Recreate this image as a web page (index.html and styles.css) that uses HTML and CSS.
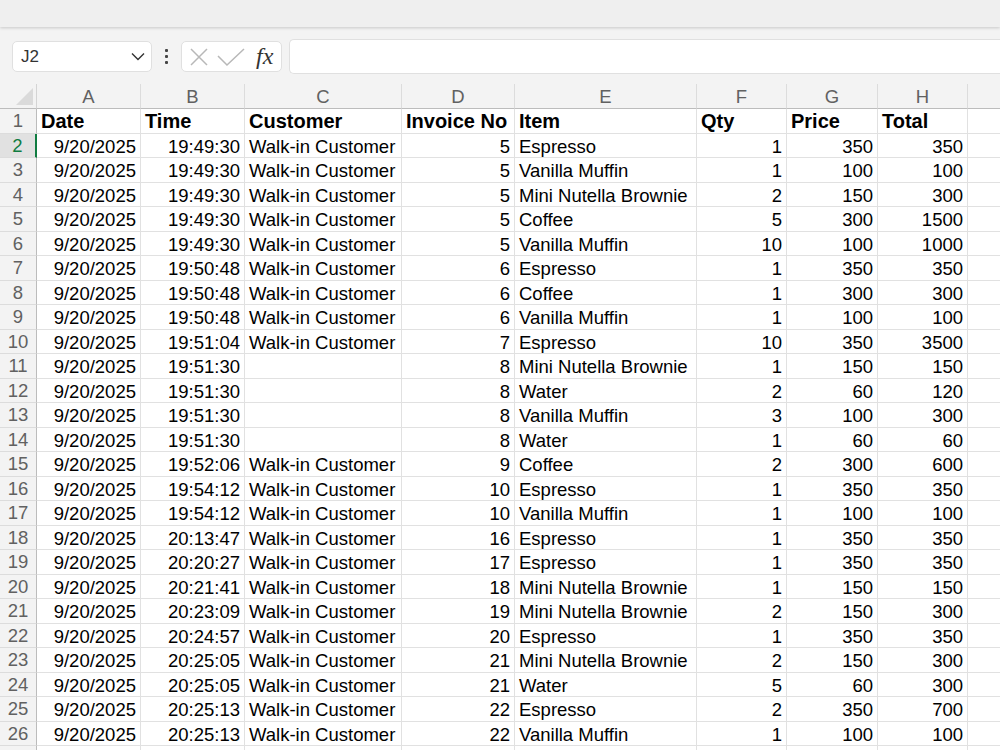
FILE: index.html
```html
<!DOCTYPE html>
<html lang="en">
<head>
    <meta charset="UTF-8">
    <title>Sales - Sheet1</title>
    <link rel="stylesheet" href="styles.css">
</head>
<body>

    <div class="top-band"></div>

    <div class="formula-bar">
        <div class="name-box">
            <span>J2</span>
            <svg width="14" height="9" viewBox="0 0 14 9"><path d="M1 1.5 L7 7.5 L13 1.5" fill="none" stroke="#333" stroke-width="1.4"/></svg>
        </div>
        <div class="more-dots">
            <i></i><i></i><i></i>
        </div>
        <div class="fx-box">
            <svg width="18" height="18" viewBox="0 0 18 18"><path d="M1 1 L17 17 M17 1 L1 17" stroke="#b8b8b8" stroke-width="1.5"/></svg>
            <svg width="28" height="20" viewBox="0 0 28 20"><path d="M1 9 L10 18 L27 2" fill="none" stroke="#b8b8b8" stroke-width="1.5"/></svg>
            <span class="fx">fx</span>
        </div>
        <div class="formula-input"></div>
    </div>

    <div class="sheet">
        <div class="corner"></div>
        <div class="col-head">A</div>
        <div class="col-head">B</div>
        <div class="col-head">C</div>
        <div class="col-head">D</div>
        <div class="col-head">E</div>
        <div class="col-head">F</div>
        <div class="col-head">G</div>
        <div class="col-head">H</div>
        <div class="col-head"></div>

        <div class="row-head">1</div>
        <div class="cell bold">Date</div>
        <div class="cell bold">Time</div>
        <div class="cell bold">Customer</div>
        <div class="cell bold">Invoice No</div>
        <div class="cell bold">Item</div>
        <div class="cell bold">Qty</div>
        <div class="cell bold">Price</div>
        <div class="cell bold">Total</div>
        <div class="cell"></div>

        <div class="row-head selected">2</div>
        <div class="cell num">9/20/2025</div><div class="cell num">19:49:30</div><div class="cell">Walk-in Customer</div>
        <div class="cell num">5</div><div class="cell">Espresso</div><div class="cell num">1</div><div class="cell num">350</div><div class="cell num">350</div><div class="cell"></div>

        <div class="row-head">3</div>
        <div class="cell num">9/20/2025</div><div class="cell num">19:49:30</div><div class="cell">Walk-in Customer</div>
        <div class="cell num">5</div><div class="cell">Vanilla Muffin</div><div class="cell num">1</div><div class="cell num">100</div><div class="cell num">100</div><div class="cell"></div>

        <div class="row-head">4</div>
        <div class="cell num">9/20/2025</div><div class="cell num">19:49:30</div><div class="cell">Walk-in Customer</div>
        <div class="cell num">5</div><div class="cell">Mini Nutella Brownie</div><div class="cell num">2</div><div class="cell num">150</div><div class="cell num">300</div><div class="cell"></div>

        <div class="row-head">5</div>
        <div class="cell num">9/20/2025</div><div class="cell num">19:49:30</div><div class="cell">Walk-in Customer</div>
        <div class="cell num">5</div><div class="cell">Coffee</div><div class="cell num">5</div><div class="cell num">300</div><div class="cell num">1500</div><div class="cell"></div>

        <div class="row-head">6</div>
        <div class="cell num">9/20/2025</div><div class="cell num">19:49:30</div><div class="cell">Walk-in Customer</div>
        <div class="cell num">5</div><div class="cell">Vanilla Muffin</div><div class="cell num">10</div><div class="cell num">100</div><div class="cell num">1000</div><div class="cell"></div>

        <div class="row-head">7</div>
        <div class="cell num">9/20/2025</div><div class="cell num">19:50:48</div><div class="cell">Walk-in Customer</div>
        <div class="cell num">6</div><div class="cell">Espresso</div><div class="cell num">1</div><div class="cell num">350</div><div class="cell num">350</div><div class="cell"></div>

        <div class="row-head">8</div>
        <div class="cell num">9/20/2025</div><div class="cell num">19:50:48</div><div class="cell">Walk-in Customer</div>
        <div class="cell num">6</div><div class="cell">Coffee</div><div class="cell num">1</div><div class="cell num">300</div><div class="cell num">300</div><div class="cell"></div>

        <div class="row-head">9</div>
        <div class="cell num">9/20/2025</div><div class="cell num">19:50:48</div><div class="cell">Walk-in Customer</div>
        <div class="cell num">6</div><div class="cell">Vanilla Muffin</div><div class="cell num">1</div><div class="cell num">100</div><div class="cell num">100</div><div class="cell"></div>

        <div class="row-head">10</div>
        <div class="cell num">9/20/2025</div><div class="cell num">19:51:04</div><div class="cell">Walk-in Customer</div>
        <div class="cell num">7</div><div class="cell">Espresso</div><div class="cell num">10</div><div class="cell num">350</div><div class="cell num">3500</div><div class="cell"></div>

        <div class="row-head">11</div>
        <div class="cell num">9/20/2025</div><div class="cell num">19:51:30</div><div class="cell"></div>
        <div class="cell num">8</div><div class="cell">Mini Nutella Brownie</div><div class="cell num">1</div><div class="cell num">150</div><div class="cell num">150</div><div class="cell"></div>

        <div class="row-head">12</div>
        <div class="cell num">9/20/2025</div><div class="cell num">19:51:30</div><div class="cell"></div>
        <div class="cell num">8</div><div class="cell">Water</div><div class="cell num">2</div><div class="cell num">60</div><div class="cell num">120</div><div class="cell"></div>

        <div class="row-head">13</div>
        <div class="cell num">9/20/2025</div><div class="cell num">19:51:30</div><div class="cell"></div>
        <div class="cell num">8</div><div class="cell">Vanilla Muffin</div><div class="cell num">3</div><div class="cell num">100</div><div class="cell num">300</div><div class="cell"></div>

        <div class="row-head">14</div>
        <div class="cell num">9/20/2025</div><div class="cell num">19:51:30</div><div class="cell"></div>
        <div class="cell num">8</div><div class="cell">Water</div><div class="cell num">1</div><div class="cell num">60</div><div class="cell num">60</div><div class="cell"></div>

        <div class="row-head">15</div>
        <div class="cell num">9/20/2025</div><div class="cell num">19:52:06</div><div class="cell">Walk-in Customer</div>
        <div class="cell num">9</div><div class="cell">Coffee</div><div class="cell num">2</div><div class="cell num">300</div><div class="cell num">600</div><div class="cell"></div>

        <div class="row-head">16</div>
        <div class="cell num">9/20/2025</div><div class="cell num">19:54:12</div><div class="cell">Walk-in Customer</div>
        <div class="cell num">10</div><div class="cell">Espresso</div><div class="cell num">1</div><div class="cell num">350</div><div class="cell num">350</div><div class="cell"></div>

        <div class="row-head">17</div>
        <div class="cell num">9/20/2025</div><div class="cell num">19:54:12</div><div class="cell">Walk-in Customer</div>
        <div class="cell num">10</div><div class="cell">Vanilla Muffin</div><div class="cell num">1</div><div class="cell num">100</div><div class="cell num">100</div><div class="cell"></div>

        <div class="row-head">18</div>
        <div class="cell num">9/20/2025</div><div class="cell num">20:13:47</div><div class="cell">Walk-in Customer</div>
        <div class="cell num">16</div><div class="cell">Espresso</div><div class="cell num">1</div><div class="cell num">350</div><div class="cell num">350</div><div class="cell"></div>

        <div class="row-head">19</div>
        <div class="cell num">9/20/2025</div><div class="cell num">20:20:27</div><div class="cell">Walk-in Customer</div>
        <div class="cell num">17</div><div class="cell">Espresso</div><div class="cell num">1</div><div class="cell num">350</div><div class="cell num">350</div><div class="cell"></div>

        <div class="row-head">20</div>
        <div class="cell num">9/20/2025</div><div class="cell num">20:21:41</div><div class="cell">Walk-in Customer</div>
        <div class="cell num">18</div><div class="cell">Mini Nutella Brownie</div><div class="cell num">1</div><div class="cell num">150</div><div class="cell num">150</div><div class="cell"></div>

        <div class="row-head">21</div>
        <div class="cell num">9/20/2025</div><div class="cell num">20:23:09</div><div class="cell">Walk-in Customer</div>
        <div class="cell num">19</div><div class="cell">Mini Nutella Brownie</div><div class="cell num">2</div><div class="cell num">150</div><div class="cell num">300</div><div class="cell"></div>

        <div class="row-head">22</div>
        <div class="cell num">9/20/2025</div><div class="cell num">20:24:57</div><div class="cell">Walk-in Customer</div>
        <div class="cell num">20</div><div class="cell">Espresso</div><div class="cell num">1</div><div class="cell num">350</div><div class="cell num">350</div><div class="cell"></div>

        <div class="row-head">23</div>
        <div class="cell num">9/20/2025</div><div class="cell num">20:25:05</div><div class="cell">Walk-in Customer</div>
        <div class="cell num">21</div><div class="cell">Mini Nutella Brownie</div><div class="cell num">2</div><div class="cell num">150</div><div class="cell num">300</div><div class="cell"></div>

        <div class="row-head">24</div>
        <div class="cell num">9/20/2025</div><div class="cell num">20:25:05</div><div class="cell">Walk-in Customer</div>
        <div class="cell num">21</div><div class="cell">Water</div><div class="cell num">5</div><div class="cell num">60</div><div class="cell num">300</div><div class="cell"></div>

        <div class="row-head">25</div>
        <div class="cell num">9/20/2025</div><div class="cell num">20:25:13</div><div class="cell">Walk-in Customer</div>
        <div class="cell num">22</div><div class="cell">Espresso</div><div class="cell num">2</div><div class="cell num">350</div><div class="cell num">700</div><div class="cell"></div>

        <div class="row-head">26</div>
        <div class="cell num">9/20/2025</div><div class="cell num">20:25:13</div><div class="cell">Walk-in Customer</div>
        <div class="cell num">22</div><div class="cell">Vanilla Muffin</div><div class="cell num">1</div><div class="cell num">100</div><div class="cell num">100</div><div class="cell"></div>

        <div class="row-head"></div>
        <div class="cell"></div><div class="cell"></div><div class="cell"></div>
        <div class="cell"></div><div class="cell"></div><div class="cell"></div><div class="cell"></div><div class="cell"></div><div class="cell"></div>
    </div>

</body>
</html>
```

FILE: styles.css
```css
html, body {
    margin: 0;
    padding: 0;
    height: 750px;
    overflow: hidden;
}

body {
    font-family: "Liberation Sans", Arial, sans-serif;
    background-color: #f3f3f3;
}

.top-band {
    height: 27px;
    background-color: #efefef;
    box-shadow: 0 1px 3px rgba(0, 0, 0, 0.18);
    position: relative;
}

.formula-bar {
    height: 57px;
    display: flex;
    align-items: center;
    padding-left: 12px;
    box-sizing: border-box;
    padding-top: 2px;
}

.name-box {
    width: 140px;
    height: 31px;
    box-sizing: border-box;
    background-color: #fff;
    border: 1px solid #e0e0e0;
    border-radius: 5px;
    display: flex;
    align-items: center;
    justify-content: space-between;
    padding: 0 6px 0 8px;
    font-size: 17px;
    color: #333;
}

.more-dots {
    width: 29px;
    display: flex;
    flex-direction: column;
    align-items: center;
    gap: 3px;
}

.more-dots i {
    width: 3px;
    height: 3px;
    background-color: #444;
    border-radius: 1px;
}

.fx-box {
    width: 101px;
    height: 31px;
    box-sizing: border-box;
    background-color: #fff;
    border: 1px solid #e0e0e0;
    border-radius: 5px;
    display: flex;
    align-items: center;
    padding: 0 6px 0 8px;
    gap: 9px;
}

.fx {
    font-family: "Liberation Serif", "Times New Roman", serif;
    font-style: italic;
    font-size: 24px;
    color: #333;
    margin-left: 2px;
}

.formula-input {
    flex: 1;
    margin-left: 7px;
    height: 33px;
    background-color: #fff;
    border: 1px solid #e0e0e0;
    border-right: none;
    border-radius: 5px 0 0 5px;
}

.sheet {
    display: grid;
    grid-template-columns: 37px 104px 104px 157px 113px 182px 90px 91px 90px 40px;
    grid-template-rows: 25px;
    grid-auto-rows: 24.5px;
    background-color: #fff;
    font-size: 18.5px;
    color: #000;
}

.corner {
    background-color: #f3f3f3;
    border-right: 1px solid #d4d4d4;
    border-bottom: 1px solid #bcbcbc;
    position: relative;
    overflow: hidden;
}

.corner::after {
    content: "";
    position: absolute;
    right: 3px;
    bottom: 3px;
    width: 0;
    height: 0;
    border-left: 17px solid transparent;
    border-bottom: 17px solid #dadada;
}

.col-head {
    background-color: #f3f3f3;
    border-right: 1px solid #dcdcdc;
    border-bottom: 1px solid #bcbcbc;
    color: #616161;
    text-align: center;
    line-height: 25px;
}

.row-head {
    background-color: #f3f3f3;
    border-right: 1px solid #bcbcbc;
    border-bottom: 1px solid #dcdcdc;
    color: #616161;
    text-align: center;
    line-height: 24px;
    box-sizing: border-box;
}

.row-head.selected {
    background-color: #e1e1e1;
    color: #107c41;
    border-right: 2px solid #107c41;
}

.cell {
    border-right: 1px solid #e1e1e1;
    border-bottom: 1px solid #e1e1e1;
    padding: 0 4px;
    line-height: 25px;
    white-space: nowrap;
    overflow: hidden;
}

.num {
    text-align: right;
}

.bold {
    font-weight: bold;
    font-size: 20px;
}
```
